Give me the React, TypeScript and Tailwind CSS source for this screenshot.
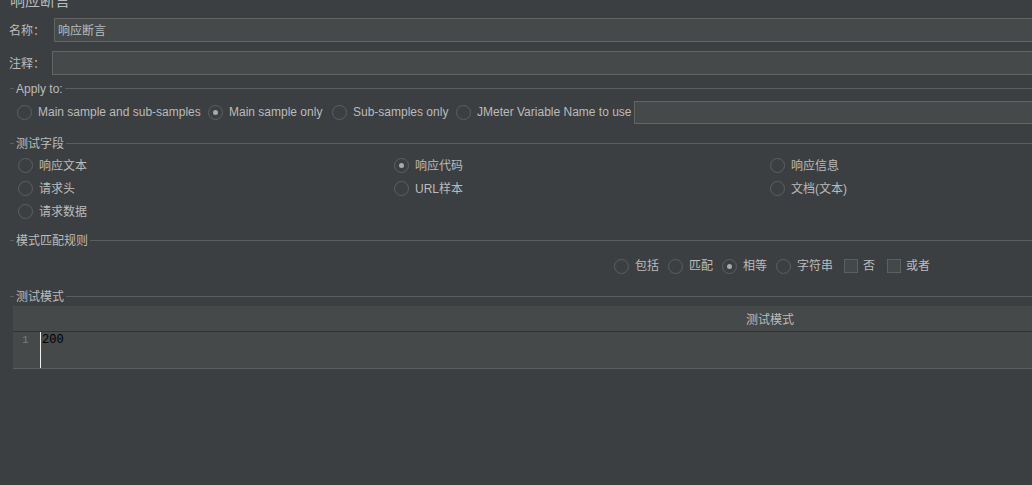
import React from "react";

function Radio({ checked, label, w }: { checked?: boolean; label: string; w: string }) {
  return (
    <div className={`flex items-center shrink-0 ${w}`}>
      <span className="w-[15px] h-[15px] rounded-full border border-[#5d6062] bg-[#3c3f41] flex items-center justify-center shrink-0">
        {checked && <span className="w-[5px] h-[5px] rounded-full bg-[#a9a9a9]" />}
      </span>
      <span className="ml-[6px] whitespace-nowrap">{label}</span>
    </div>
  );
}

function Check({ label, w }: { label: string; w: string }) {
  return (
    <div className={`flex items-center shrink-0 ${w}`}>
      <span className="w-[14px] h-[14px] border border-[#5d6062] bg-[#43494a] shrink-0" />
      <span className="ml-[5px] whitespace-nowrap">{label}</span>
    </div>
  );
}

function GroupTitle({ title, mt }: { title: string; mt: string }) {
  return (
    <div className={`flex items-center h-[14px] pl-[10px] ${mt}`}>
      <span className="w-[4px] h-px bg-[#5b5d5f]" />
      <span className="px-[2px] pt-[2px] leading-[14px] whitespace-nowrap">{title}</span>
      <span className="flex-1 h-px bg-[#5b5d5f]" />
    </div>
  );
}

export default function App() {
  return (
    <div
      className="w-[1032px] h-[485px] overflow-hidden bg-[#3c3f41] text-[#bbbbbb] text-[12px]"
      style={{ fontFamily: '"Liberation Sans", "Noto Sans CJK SC", sans-serif' }}
    >
      <div className="w-[1547px]">
        <div className="-mt-[8px] h-[26px] pl-[10px] text-[15px] leading-[18px]">响应断言</div>

        <div className="flex items-center h-[24px]">
          <span className="w-[54px] pl-[9px] pt-[2px] shrink-0">名称：</span>
          <div className="flex-1 h-[24px] border border-[#646464] bg-[#45494a] flex items-center pl-[3px] pt-[1px]">响应断言</div>
        </div>

        <div className="flex items-center h-[24px] mt-[9px]">
          <span className="w-[52px] pl-[9px] pt-[2px] shrink-0">注释：</span>
          <div className="flex-1 h-[24px] border border-[#646464] bg-[#45494a]" />
        </div>

        <GroupTitle title="Apply to:" mt="mt-[6px]" />
        <div className="flex items-center h-[24px] mt-[5px] pl-[17px]">
          <Radio label="Main sample and sub-samples" w="w-[191px]" />
          <Radio label="Main sample only" checked w="w-[124px]" />
          <Radio label="Sub-samples only" w="w-[124px]" />
          <Radio label="JMeter Variable Name to use" w="w-[178px]" />
          <div className="flex-1 h-[23px] border border-[#646464] bg-[#45494a]" />
        </div>

        <GroupTitle title="测试字段" mt="mt-[12px]" />
        <div className="mt-[4px] pl-[18px] grid grid-cols-[376px_376px_376px]">
          <div className="h-[23px] flex items-center"><Radio label="响应文本" w="w-[200px]" /></div>
          <div className="h-[23px] flex items-center"><Radio label="响应代码" checked w="w-[200px]" /></div>
          <div className="h-[23px] flex items-center"><Radio label="响应信息" w="w-[200px]" /></div>
          <div className="h-[23px] flex items-center"><Radio label="请求头" w="w-[200px]" /></div>
          <div className="h-[23px] flex items-center"><Radio label="URL样本" w="w-[200px]" /></div>
          <div className="h-[23px] flex items-center"><Radio label="文档(文本)" w="w-[200px]" /></div>
          <div className="h-[23px] flex items-center"><Radio label="请求数据" w="w-[200px]" /></div>
        </div>

        <GroupTitle title="模式匹配规则" mt="mt-[10px]" />
        <div className="flex items-center justify-center h-[24px] mt-[7px]">
          <Radio label="包括" w="w-[54px]" />
          <Radio label="匹配" w="w-[54px]" />
          <Radio label="相等" checked w="w-[54px]" />
          <Radio label="字符串" w="w-[68px]" />
          <Check label="否" w="w-[43px]" />
          <Check label="或者" w="w-[46px]" />
        </div>

        <GroupTitle title="测试模式" mt="mt-[11px]" />
        <div className="mt-[3px] ml-[13px] w-[1514px]">
          <div className="h-[26px] bg-[#45494a] border-b border-[#2f3133] flex items-center justify-center pt-[2px]">测试模式</div>
          <div className="h-[37px] bg-[#45494a] border-b border-[#5b5d5f] flex">
            <div className="w-[27px] pl-[9px] h-[14px] leading-[14px] mt-[1px] text-[#7a7d80] text-[11px]" style={{ fontFamily: '"Liberation Mono", monospace' }}>
              1
            </div>
            <div className="w-px bg-[#f0f0f0] h-full" />
            <div
              className="pl-[1px] mt-[1px] leading-[14px] h-[14px] text-[12px] text-black"
              style={{ fontFamily: '"Liberation Mono", monospace' }}
            >
              200
            </div>
          </div>
        </div>
      </div>
    </div>
  );
}
